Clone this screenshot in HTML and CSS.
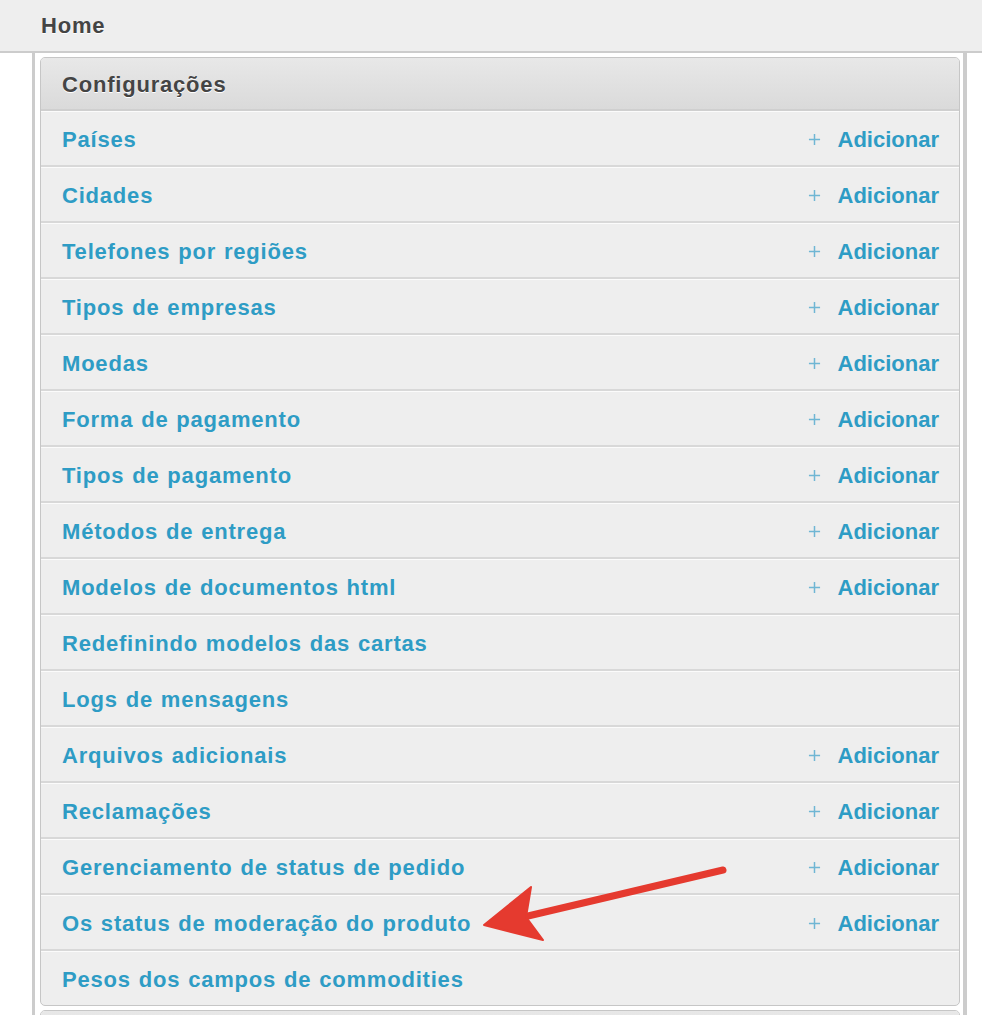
FILE: index.html
```html
<!DOCTYPE html>
<html lang="pt">
<head>
<meta charset="utf-8">
<title>Home</title>
<link rel="stylesheet" href="styles.css">
</head>
<body>
<div class="topbar"><span class="crumb">Home</span></div>
<div class="content">
  <div class="module">
    <div class="module-head">Configurações</div>
    <ul class="rows">
      <li class="row"><a class="name" href="#">Países</a><a class="add" href="#"><svg class="plus" viewBox="0 0 14 14"><path d="M7 1v12M1 7h12"/></svg>Adicionar</a></li>
      <li class="row"><a class="name" href="#">Cidades</a><a class="add" href="#"><svg class="plus" viewBox="0 0 14 14"><path d="M7 1v12M1 7h12"/></svg>Adicionar</a></li>
      <li class="row"><a class="name" href="#">Telefones por regiões</a><a class="add" href="#"><svg class="plus" viewBox="0 0 14 14"><path d="M7 1v12M1 7h12"/></svg>Adicionar</a></li>
      <li class="row"><a class="name" href="#">Tipos de empresas</a><a class="add" href="#"><svg class="plus" viewBox="0 0 14 14"><path d="M7 1v12M1 7h12"/></svg>Adicionar</a></li>
      <li class="row"><a class="name" href="#">Moedas</a><a class="add" href="#"><svg class="plus" viewBox="0 0 14 14"><path d="M7 1v12M1 7h12"/></svg>Adicionar</a></li>
      <li class="row"><a class="name" href="#">Forma de pagamento</a><a class="add" href="#"><svg class="plus" viewBox="0 0 14 14"><path d="M7 1v12M1 7h12"/></svg>Adicionar</a></li>
      <li class="row"><a class="name" href="#">Tipos de pagamento</a><a class="add" href="#"><svg class="plus" viewBox="0 0 14 14"><path d="M7 1v12M1 7h12"/></svg>Adicionar</a></li>
      <li class="row"><a class="name" href="#">Métodos de entrega</a><a class="add" href="#"><svg class="plus" viewBox="0 0 14 14"><path d="M7 1v12M1 7h12"/></svg>Adicionar</a></li>
      <li class="row"><a class="name" href="#">Modelos de documentos html</a><a class="add" href="#"><svg class="plus" viewBox="0 0 14 14"><path d="M7 1v12M1 7h12"/></svg>Adicionar</a></li>
      <li class="row"><a class="name" href="#">Redefinindo modelos das cartas</a></li>
      <li class="row"><a class="name" href="#">Logs de mensagens</a></li>
      <li class="row"><a class="name" href="#">Arquivos adicionais</a><a class="add" href="#"><svg class="plus" viewBox="0 0 14 14"><path d="M7 1v12M1 7h12"/></svg>Adicionar</a></li>
      <li class="row"><a class="name" href="#">Reclamações</a><a class="add" href="#"><svg class="plus" viewBox="0 0 14 14"><path d="M7 1v12M1 7h12"/></svg>Adicionar</a></li>
      <li class="row"><a class="name" href="#">Gerenciamento de status de pedido</a><a class="add" href="#"><svg class="plus" viewBox="0 0 14 14"><path d="M7 1v12M1 7h12"/></svg>Adicionar</a></li>
      <li class="row"><a class="name" href="#">Os status de moderação do produto</a><a class="add" href="#"><svg class="plus" viewBox="0 0 14 14"><path d="M7 1v12M1 7h12"/></svg>Adicionar</a></li>
      <li class="row"><a class="name" href="#">Pesos dos campos de commodities</a></li>
    </ul>
  </div>
  <div class="module">
    <div class="module-head">&nbsp;</div>
  </div>
</div>
<svg class="arrow" width="982" height="1015" viewBox="0 0 982 1015">
  <path d="M723 870 L528 916" stroke="#e53a2f" stroke-width="7" stroke-linecap="round" fill="none"/>
  <path d="M484 925 L531 887 L526 917 L543 940 Z" fill="#e53a2f" stroke="#e53a2f" stroke-width="2" stroke-linejoin="round"/>
</svg>
</body>
</html>
```

FILE: styles.css
```css
html, body {
  margin: 0;
  padding: 0;
  background: #fff;
  font-family: "Liberation Sans", Arial, Helvetica, sans-serif;
  font-weight: bold;
  font-size: 22px;
  letter-spacing: 0.8px;
  word-spacing: 1px;
  overflow: hidden;
}

.topbar {
  height: 51px;
  background: #eeeeee;
  border-bottom: 2px solid #cccccc;
  display: flex;
  align-items: center;
  padding-left: 41px;
}

.crumb {
  color: #444;
  text-shadow: 0 1px 0 #fff;
}

.content {
  margin-left: 32px;
  width: 920px;
  border-left: 3px solid #cccccc;
  border-right: 4px solid #cccccc;
  padding: 4px 3px 0 5px;
  display: flex;
  flex-direction: column;
  gap: 4px;
  min-height: 1000px;
}

.module {
  width: 918px;
  border: 1px solid #c6c6c6;
  border-radius: 5px;
  background: #eeeeee;
  overflow: hidden;
}

.module-head {
  height: 48px;
  padding-top: 3px;
  display: flex;
  align-items: center;
  padding-left: 21px;
  color: #444;
  text-shadow: 0 1px 0 #fff;
  background: linear-gradient(#e8e8e8, #dadada);
  border-bottom: 2px solid #cfcfcf;
}

.rows {
  list-style: none;
  margin: 0;
  padding: 0;
}

.row {
  height: 51px;
  padding: 2px 20px 0 21px;
  display: flex;
  align-items: center;
  justify-content: space-between;
  border-top: 1px solid #fbfbfb;
  border-bottom: 2px solid #d8d8d8;
}

.row:last-child {
  border-bottom: none;
}

.name, .add {
  color: #2e9cc5;
  text-decoration: none;
}

.add {
  display: flex;
  align-items: center;
  letter-spacing: 0;
}

.plus {
  width: 13px;
  height: 13px;
  margin-right: 17px;
  stroke: #6fb6d4;
  stroke-width: 1.6;
  fill: none;
}

.arrow {
  position: absolute;
  left: 0;
  top: 0;
  pointer-events: none;
}
```
